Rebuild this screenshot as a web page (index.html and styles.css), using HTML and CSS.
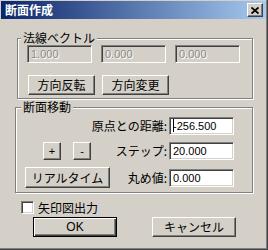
FILE: index.html
```html
<!DOCTYPE html>
<html lang="ja">
<head>
    <meta charset="UTF-8">
    <title>断面作成</title>
    <link rel="stylesheet" href="styles.css">
</head>
<body>
    <div class="window">
        <div class="titlebar">
            <span class="title">断面作成</span>
            <span class="close-btn">
                <svg width="8" height="7" viewBox="0 0 8 7">
                    <path d="M0.5 0.5 L7.5 6.5 M7.5 0.5 L0.5 6.5" stroke="#000" stroke-width="1.8" fill="none"/>
                </svg>
            </span>
        </div>

        <div class="group group-normal">
            <span class="group-title">法線ベクトル</span>
            <div class="vector-row">
                <div class="field disabled">1.000</div>
                <div class="field disabled">0.000</div>
                <div class="field disabled">0.000</div>
            </div>
            <div class="button-row">
                <button class="btn btn-dir">方向反転</button>
                <button class="btn btn-dir">方向変更</button>
            </div>
        </div>

        <div class="group group-move">
            <span class="group-title">断面移動</span>
            <div class="move-grid">
                <span class="label label-wide">原点との距離:</span>
                <div class="field"><span class="caret"></span>-256.500</div>

                <div class="step-buttons">
                    <button class="btn btn-small">+</button>
                    <button class="btn btn-small">-</button>
                </div>
                <span class="label">ステップ:</span>
                <div class="field">20.000</div>

                <button class="btn btn-realtime">リアルタイム</button>
                <span class="label">丸め値:</span>
                <div class="field">0.000</div>
            </div>
        </div>

        <label class="check-row">
            <span class="checkbox"></span>
            <span>矢印図出力</span>
        </label>

        <div class="footer">
            <button class="btn btn-main btn-default">OK</button>
            <button class="btn btn-main">キャンセル</button>
        </div>
    </div>
</body>
</html>
```

FILE: styles.css
```css
body {
    margin: 0;
    font-family: "Noto Sans CJK JP", "Liberation Sans", sans-serif;
    font-size: 12px;
    color: #000;
}

.window {
    width: 268px;
    height: 250px;
    box-sizing: border-box;
    background: #d4d0c8;
    padding: 1px 1px 0 1px;
    border-right: 1px solid #404040;
    border-bottom: 1px solid #404040;
    box-shadow: inset -1px -1px #808080;
    display: flex;
    flex-direction: column;
}

.titlebar {
    height: 18px;
    display: flex;
    align-items: center;
    justify-content: space-between;
    background: linear-gradient(to right, #0a246a, #a6caf0);
    padding-left: 4px;
}

.title {
    color: #fff;
    font-weight: bold;
    font-size: 12px;
    line-height: 12px;
}

.close-btn {
    width: 16px;
    height: 14px;
    box-sizing: border-box;
    margin-right: 3px;
    background: #d4d0c8;
    border: 1px solid;
    border-color: #fff #404040 #404040 #fff;
    box-shadow: inset -1px -1px #808080;
    display: flex;
    align-items: center;
    justify-content: center;
}

.close-btn svg {
    display: block;
}

/* etched group boxes */
.group {
    box-sizing: border-box;
    border: 1px solid #808080;
    box-shadow: inset 1px 1px #fff, 1px 1px #fff;
    display: flex;
    flex-direction: column;
}

.group-title {
    align-self: flex-start;
    margin-top: -7px;
    line-height: 12px;
    height: 12px;
    padding: 0 2px;
    background: #d4d0c8;
}

.group-normal {
    margin: 19px 0 0 16px;
    width: 236px;
    padding: 0 9px 3px 9px;
}

.group-normal .group-title {
    margin-left: -6px;
}

.vector-row {
    display: flex;
    gap: 9px;
    margin-top: 1px;
}

.vector-row .field {
    width: 65px;
}

.button-row {
    display: flex;
    gap: 7px;
    margin-top: 12px;
    margin-left: 1px;
}

.group-move {
    margin: 8px 0 0 14px;
    width: 238px;
    padding: 0 18px 4px 9px;
}

.group-move .group-title {
    margin-left: -4px;
}

.move-grid {
    margin-top: 4px;
    display: grid;
    grid-template-columns: 85px 1fr 65px;
    grid-template-rows: 18px 18px 21px;
    row-gap: 7px;
    align-items: center;
}

.move-grid .label {
    text-align: right;
    padding-right: 2px;
    line-height: 14px;
}

.label-wide {
    grid-column: 1 / 3;
}

.step-buttons {
    display: flex;
    gap: 12px;
    padding-left: 18px;
}

/* text fields */
.field {
    height: 18px;
    box-sizing: border-box;
    background: #fff;
    border: 1px solid;
    border-color: #808080 #fff #fff #808080;
    box-shadow: inset 1px 1px #404040, inset -1px -1px #d4d0c8;
    font-family: "Liberation Sans", sans-serif;
    font-size: 11px;
    line-height: 16px;
    padding-left: 3px;
    white-space: nowrap;
    overflow: hidden;
}

.field.disabled {
    background: #d4d0c8;
    color: #8c8a85;
    text-shadow: 1px 1px #fff;
}

.caret {
    display: inline-block;
    width: 1px;
    height: 13px;
    background: #000;
    vertical-align: -2px;
    margin-right: -1px;
}

/* buttons */
.btn {
    box-sizing: border-box;
    margin: 0;
    padding: 0;
    background: #d4d0c8;
    border: 1px solid;
    border-color: #fff #404040 #404040 #fff;
    box-shadow: inset -1px -1px #808080;
    font-family: "Noto Sans CJK JP", "Liberation Sans", sans-serif;
    font-size: 12px;
    line-height: 14px;
    color: #000;
}

.btn-dir {
    width: 67px;
    height: 20px;
}

.btn-small {
    width: 18px;
    height: 18px;
    font-family: "Liberation Sans", sans-serif;
    font-size: 11px;
}

.btn-realtime {
    width: 85px;
    height: 21px;
}

.check-row {
    display: flex;
    align-items: center;
    gap: 4px;
    margin: 8px 0 0 20px;
    height: 13px;
    line-height: 13px;
}

.checkbox {
    width: 13px;
    height: 13px;
    box-sizing: border-box;
    background: #fff;
    border: 1px solid;
    border-color: #808080 #fff #fff #808080;
    box-shadow: inset 1px 1px #404040, inset -1px -1px #d4d0c8;
}

.footer {
    display: flex;
    gap: 35px;
    margin: 3px 0 0 32px;
}

.btn-main {
    width: 84px;
    height: 20px;
}

.btn-main:first-child {
    font-family: "Liberation Sans", sans-serif;
}

.btn-default {
    border: 1px solid #000;
    box-shadow: inset 1px 1px #fff, inset -1px -1px #404040, inset -2px -2px #808080;
}
```
